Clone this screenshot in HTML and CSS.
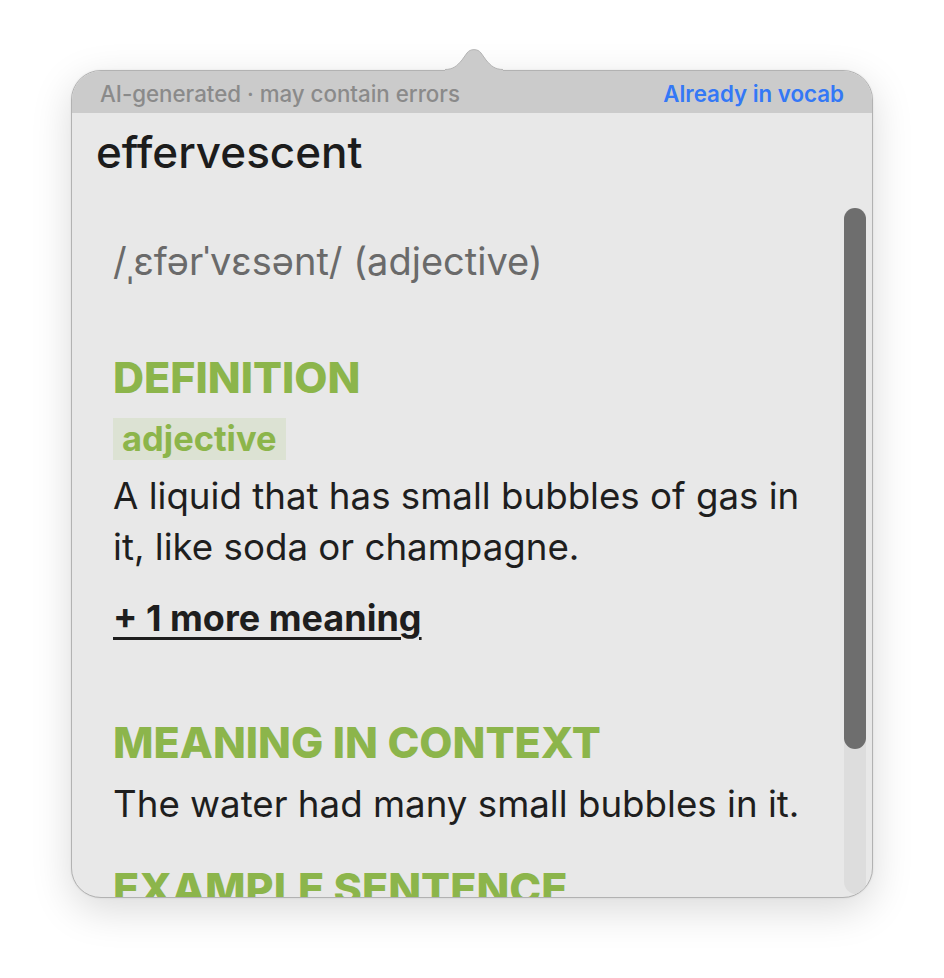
FILE: index.html
```html
<!DOCTYPE html>
<html lang="en">
<head>
  <meta charset="UTF-8" />
  <title>Lookup</title>
  <link rel="stylesheet" href="styles.css">
</head>
<body>
  <div class="popover">
    <svg class="arrow" width="58" height="24" viewBox="0 0 58 24">
      <path d="M0 22.5 C8 22.5 12 19 17 13 L22 6 C25 1.5 33 1.5 36 6 L41 13 C46 19 50 22.5 58 22.5 L58 24 L0 24 Z" fill="#cbcbcb"/>
      <path d="M0 22.5 C8 22.5 12 19 17 13 L22 6 C25 1.5 33 1.5 36 6 L41 13 C46 19 50 22.5 58 22.5" fill="none" stroke="#b4b4b4" stroke-width="1"/>
    </svg>
    <div class="panel">
      <div class="topbar">
        <span class="note">AI-generated · may contain errors</span>
        <span class="status">Already in vocab</span>
      </div>
      <h1 class="word">effervescent</h1>
      <div class="body">
        <div class="content">
          <p class="pron">/ˌɛfərˈvɛsənt/ (adjective)</p>

          <h2 class="heading definition">DEFINITION</h2>
          <span class="pos">adjective</span>
          <p class="text def">A liquid that has small bubbles of gas in it, like soda or champagne.</p>
          <a class="more">+ 1 more meaning</a>

          <h2 class="heading context">MEANING IN CONTEXT</h2>
          <p class="text ctx">The water had many small bubbles in it.</p>

          <h2 class="heading example">EXAMPLE SENTENCE</h2>
          <p class="text">The effervescent drink fizzed as soon as it was poured.</p>
        </div>
        <div class="scrollbar">
          <div class="thumb"></div>
        </div>
      </div>
    </div>
  </div>
</body>
</html>
```

FILE: styles.css
```css
* {
  margin: 0;
  padding: 0;
  box-sizing: border-box;
}

html,
body {
  height: 100%;
}

body {
  background: #fff;
  font-family: Inter, 'Noto Sans', sans-serif;
  color: #1e1e1e;
  padding-top: 48px;
}

.popover {
  position: relative;
  width: 802px;
  margin: 0 auto;
  padding-top: 22px;
}

.arrow {
  position: absolute;
  top: -1px;
  left: 374px;
  z-index: 2;
}

.panel {
  height: 828px;
  background: #e8e8e8;
  border: 1px solid #b2b2b2;
  border-radius: 30px;
  overflow: hidden;
  box-shadow: 0 12px 40px rgba(0, 0, 0, 0.15), 0 0 2px rgba(0, 0, 0, 0.1);
  display: flex;
  flex-direction: column;
}

.topbar {
  height: 42px;
  flex: none;
  background: #cbcbcb;
  display: flex;
  align-items: center;
  justify-content: space-between;
  padding: 2px 28px 0 28px;
  font-size: 22.3px;
  font-weight: 500;
}

.note {
  color: #8a8a8a;
}

.status {
  color: #3478f6;
  font-weight: 600;
}

.word {
  font-size: 44px;
  font-weight: 500;
  line-height: 48px;
  padding: 15px 0 0 24px;
  height: 76px;
  flex: none;
  color: #1c1c1c;
}

.body {
  flex: 1;
  min-height: 0;
  display: flex;
}

.content {
  flex: 1;
  overflow: hidden;
  padding: 48px 28px 0 41px;
}

.pron {
  font-size: 38px;
  line-height: 48px;
  color: #6a6a6a;
}

.heading {
  font-size: 43px;
  font-weight: 800;
  line-height: 44px;
  color: #8cb54b;
  white-space: nowrap;
}

.definition {
  margin-top: 70px;
}

.context {
  margin-top: 76px;
}

.example {
  margin-top: 37px;
}

.pos {
  display: inline-block;
  margin-top: 19px;
  height: 42px;
  line-height: 42px;
  padding: 0 9px;
  background: #dce2d3;
  color: #8cb54b;
  font-size: 34.5px;
  font-weight: 700;
}

.text {
  font-size: 36.7px;
  line-height: 51px;
}

.def {
  margin-top: 10px;
}

.ctx {
  margin-top: 14px;
}

.more {
  display: inline-block;
  margin-top: 21px;
  font-size: 36px;
  line-height: 51px;
  font-weight: 700;
  text-decoration: underline;
  text-underline-offset: 6px;
  text-decoration-thickness: 3px;
  color: #1e1e1e;
}

.scrollbar {
  flex: none;
  width: 22px;
  margin: 19px 6px 3px 0;
  background: #dddddd;
  border-radius: 11px 11px 11px 14px;
}

.thumb {
  height: 541px;
  background: #6e6e6e;
  border-radius: 11px;
}
```
